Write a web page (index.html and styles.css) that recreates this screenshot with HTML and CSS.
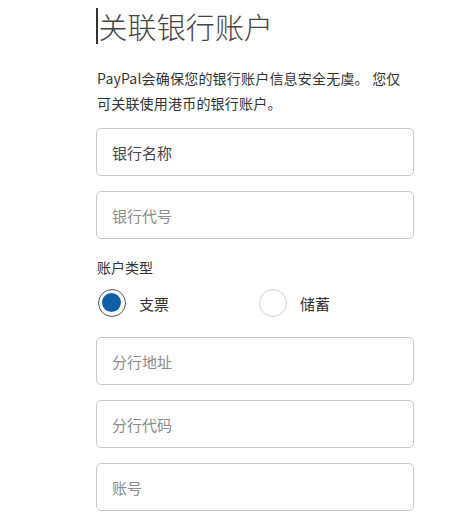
FILE: index.html
```html
<!DOCTYPE html>
<html lang="zh-CN">
<head>
<meta charset="utf-8">
<title>关联银行账户</title>
<link rel="stylesheet" href="styles.css">
</head>
<body>
<main class="page">
  <h1 class="title"><span class="caret"></span>关联银行账户</h1>
  <p class="intro">PayPal会确保您的银行账户信息安全无虞。 您仅可关联使用港币的银行账户。</p>
  <div class="fields">
    <input class="field filled" type="text" value="银行名称">
    <input class="field" type="text" placeholder="银行代号">
  </div>
  <div class="type-label">账户类型</div>
  <div class="radios">
    <label class="option"><span class="radio checked"></span><span class="opt-text">支票</span></label>
    <label class="option"><span class="radio"></span><span class="opt-text">储蓄</span></label>
  </div>
  <div class="fields lower">
    <input class="field" type="text" placeholder="分行地址">
    <input class="field" type="text" placeholder="分行代码">
    <input class="field" type="text" placeholder="账号">
  </div>
</main>
</body>
</html>
```

FILE: styles.css
```css
* { box-sizing: border-box; }
html, body { margin: 0; padding: 0; background: #fff; }
body {
  font-family: "Noto Sans CJK SC", "Noto Sans", sans-serif;
  color: #333;
}
.page {
  width: 456px;
  padding: 8px 0 0 96px;
}
.title {
  margin: 0;
  height: 36px;
  display: flex;
  align-items: center;
  font-size: 29px;
  line-height: 36px;
  font-weight: 200;
  color: #444;
  letter-spacing: 0.1px;
}
.caret {
  display: inline-block;
  width: 1.5px;
  height: 36px;
  background: #333;
  margin-right: 1px;
}
.intro {
  margin: 22px 0 0 1px;
  width: 310px;
  font-size: 14px;
  line-height: 25px;
  color: #333;
  letter-spacing: 0.2px;
}
.fields {
  margin-top: 12px;
  width: 318px;
  display: flex;
  flex-direction: column;
  gap: 15px;
}
.fields.lower { margin-top: 20px; }
.field {
  display: block;
  width: 318px;
  height: 48px;
  border: 1px solid #c9c9c9;
  border-radius: 5px;
  padding: 0 0 0 15px;
  font-family: inherit;
  font-size: 15px;
  color: #444;
  background: #fff;
  outline: none;
}
.field::placeholder { color: #8c8c8c; opacity: 1; }
.type-label {
  margin: 18px 0 0 1px;
  font-size: 14px;
  line-height: 20px;
  color: #333;
}
.radios {
  margin-top: 12px;
  display: grid;
  grid-template-columns: 161px 160px;
  padding-left: 2px;
}
.option {
  display: flex;
  align-items: center;
  gap: 13px;
  height: 28px;
}
.radio {
  width: 28px;
  height: 28px;
  border-radius: 50%;
  border: 1px solid #d2d2d2;
  background: #fff;
  flex: none;
}
.radio.checked {
  border: 1.5px solid #555;
  position: relative;
}
.radio.checked::after {
  content: "";
  position: absolute;
  left: 3px;
  top: 3px;
  width: 19px;
  height: 19px;
  border-radius: 50%;
  background: #0f5fa8;
}
.opt-text {
  font-size: 15px;
  color: #333;
}
```
